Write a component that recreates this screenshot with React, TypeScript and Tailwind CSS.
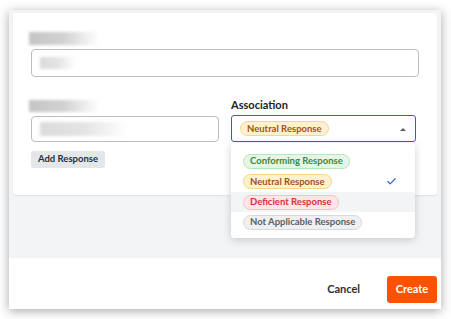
import { Check } from "lucide-react";

const pills = {
  green: "bg-[#e5f6e6] border-[#b9e4bc] text-[#3b8a41]",
  yellow: "bg-[#fdf1cf] border-[#f4d68f] text-[#a4501c]",
  red: "bg-[#fde6e7] border-[#f6c1c4] text-[#d2323d]",
  gray: "bg-[#eff0f1] border-[#d6d9db] text-[#5b6065]",
};

function Pill({ tone, children }: { tone: keyof typeof pills; children: string }) {
  return (
    <span
      className={`inline-flex items-center h-[15px] px-[6px] rounded-full border text-[9.5px] font-bold leading-none ${pills[tone]}`}
    >
      {children}
    </span>
  );
}

function Blur({ className }: { className: string }) {
  return <div className={`bg-linear-to-r from-[#c4c4c4] via-[#d2d2d2] to-transparent blur-[1.5px] ${className}`} />;
}

export default function App() {
  return (
    <div className="w-[451px] h-[319px] bg-white pt-[10px] pl-[9px] font-['Lato',sans-serif] text-[#222]">
      <div className="w-[432px] h-[299px] bg-white shadow-[0_2px_10px_rgba(0,0,0,0.35)] flex flex-col">
        {/* Body */}
        <div className="h-[248px] bg-[#f3f4f5] pt-[3px] px-[4px]">
          <div className="h-[182px] bg-white rounded-[3px] shadow-[0_1px_2px_rgba(0,0,0,0.08)] pt-[19px] pl-[18px] pr-[18px]">
            <Blur className="w-[70px] h-[13px] ml-[-2px]" />
            <div className="mt-[4px] h-[28px] border border-[#b9bec3] rounded-[4px] flex items-center pl-[8px]">
              <Blur className="w-[36px] h-[12px] opacity-60" />
            </div>

            <div className="mt-[23px] grid grid-cols-[188px_185px] gap-x-[12px]">
              <div>
                <Blur className="w-[70px] h-[12px] ml-[-2px]" />
                <div className="mt-[4px] h-[26px] border border-[#b9bec3] rounded-[4px] flex items-center pl-[8px]">
                  <Blur className="w-[88px] h-[14px] opacity-60" />
                </div>
                <button className="mt-[9px] h-[17px] w-[74px] bg-[#e4e7ea] rounded-[2px] text-[9.5px] font-bold text-[#2a2e33]">
                  Add Response
                </button>
              </div>

              <div className="relative">
                <div className="h-[12px] text-[11px] font-bold leading-[12px] -mt-[1px]">Association</div>
                <div className="mt-[4px] h-[27px] border-[1.5px] border-[#2a62d6] rounded-[3px] flex items-center pl-[8px] pr-[9px]">
                  <Pill tone="yellow">Neutral Response</Pill>
                  <svg className="ml-auto" width="6" height="4" viewBox="0 0 6 4">
                    <path d="M0 4 L3 1 L6 4 Z" fill="#5a5f64" />
                  </svg>
                </div>

                {/* Dropdown */}
                <div className="absolute left-0 top-[43px] w-[184px] bg-white rounded-[3px] shadow-[0_2px_8px_rgba(0,0,0,0.18)] pt-[8px] pb-[6px] z-10">
                  <div className="h-[20px] flex items-center pl-[12px]">
                    <Pill tone="green">Conforming Response</Pill>
                  </div>
                  <div className="h-[21px] flex items-center pl-[12px] pr-[18px]">
                    <Pill tone="yellow">Neutral Response</Pill>
                    <Check className="ml-auto text-[#2a62d6]" size={11} strokeWidth={2.5} />
                  </div>
                  <div className="h-[20px] flex items-center pl-[12px] bg-[#f3f4f5]">
                    <Pill tone="red">Deficient Response</Pill>
                  </div>
                  <div className="h-[20px] flex items-center pl-[12px]">
                    <Pill tone="gray">Not Applicable Response</Pill>
                  </div>
                </div>
              </div>
            </div>
          </div>
        </div>

        {/* Footer */}
        <div className="flex-1 flex items-end justify-end pb-[6px] pr-[4px] gap-[27px]">
          <button className="h-[27px] text-[11px] font-bold text-[#2a2e33]">Cancel</button>
          <button className="h-[27px] w-[50px] bg-[#ff5200] rounded-[3px] text-[11px] font-bold text-white">
            Create
          </button>
        </div>
      </div>
    </div>
  );
}
